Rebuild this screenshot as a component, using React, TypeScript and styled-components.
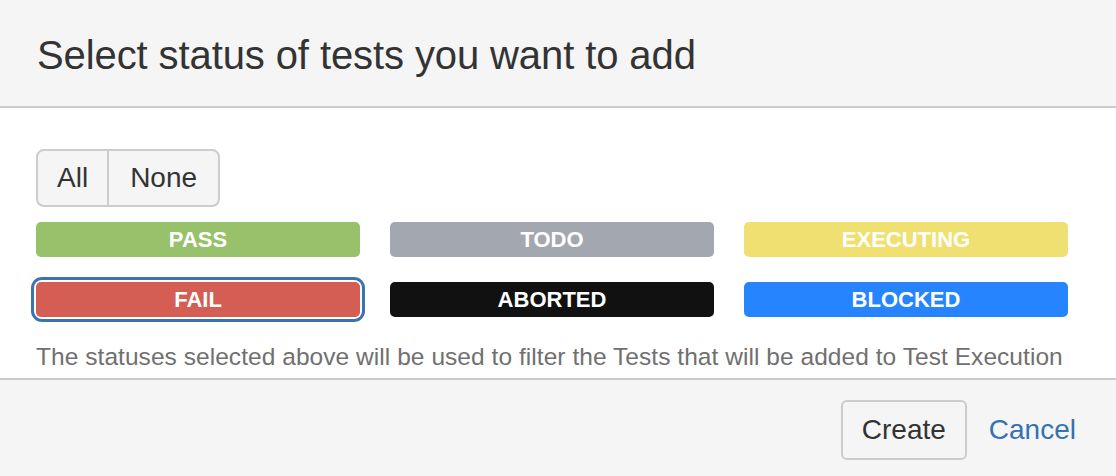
import styled, { createGlobalStyle } from "styled-components";

const GlobalStyle = createGlobalStyle`
  html, body {
    margin: 0;
    padding: 0;
    background: #ffffff;
    font-family: "Liberation Sans", Arial, sans-serif;
  }
`;

type Status = { label: string; color: string; focused?: boolean };

const statuses: Status[] = [
  { label: "PASS", color: "#97c16a" },
  { label: "TODO", color: "#a3a7af" },
  { label: "EXECUTING", color: "#f0e071" },
  { label: "FAIL", color: "#d45e54", focused: true },
  { label: "ABORTED", color: "#111111" },
  { label: "BLOCKED", color: "#2684ff" },
];

export default function App() {
  return (
    <>
      <GlobalStyle />
      <Dialog>
        <Header>
          <Title>Select status of tests you want to add</Title>
        </Header>
        <Content>
          <ButtonGroup>
            <GroupButton>All</GroupButton>
            <GroupButton>None</GroupButton>
          </ButtonGroup>
          <StatusGrid>
            {statuses.map((s) => (
              <StatusSlot key={s.label} $focused={s.focused}>
                <StatusBar $color={s.color}>{s.label}</StatusBar>
              </StatusSlot>
            ))}
          </StatusGrid>
          <Hint>
            The statuses selected above will be used to filter the Tests that
            will be added to Test Execution
          </Hint>
        </Content>
        <Footer>
          <CreateButton>Create</CreateButton>
          <CancelLink href="#">Cancel</CancelLink>
        </Footer>
      </Dialog>
    </>
  );
}

const Dialog = styled.div`
  display: flex;
  flex-direction: column;
  width: 1116px;
  height: 476px;
`;

const Header = styled.div`
  height: 108px;
  background: #f5f5f5;
  border-bottom: 2px solid #cccccc;
  display: flex;
  align-items: center;
  padding: 4px 37px 0;
  box-sizing: border-box;
  flex: none;
`;

const Title = styled.h2`
  margin: 0;
  font-size: 40px;
  font-weight: 400;
  color: #333333;
  letter-spacing: -0.1px;
`;

const Content = styled.div`
  height: 270px;
  padding: 41px 36px 0;
  box-sizing: border-box;
  display: flex;
  flex-direction: column;
  flex: none;
`;

const ButtonGroup = styled.div`
  display: inline-flex;
  align-self: flex-start;
  height: 58px;
  border: 2px solid #cccccc;
  border-radius: 8px;
  background: #f5f5f5;
  box-sizing: border-box;
  overflow: hidden;
`;

const GroupButton = styled.button`
  border: none;
  background: transparent;
  font-family: inherit;
  font-size: 28px;
  color: #333333;
  padding: 0 19px;
  & + & {
    border-left: 2px solid #cccccc;
    padding: 0 21px;
  }
`;

const StatusGrid = styled.div`
  display: grid;
  grid-template-columns: repeat(3, 324px);
  column-gap: 30px;
  row-gap: 25px;
  margin-top: 15px;
`;

const StatusSlot = styled.div<{ $focused?: boolean }>`
  display: flex;
  border-radius: 6px;
  box-shadow: ${(p) =>
    p.$focused ? "0 0 0 2px #ffffff, 0 0 0 5px #3b73af" : "none"};
`;

const StatusBar = styled.div<{ $color: string }>`
  flex: 1;
  height: 35px;
  border-radius: 5px;
  background: ${(p) => p.$color};
  color: #ffffff;
  font-weight: 700;
  font-size: 22px;
  display: flex;
  align-items: center;
  justify-content: center;
`;

const Hint = styled.p`
  margin: 26px 0 0;
  font-size: 24.5px;
  color: #707070;
  letter-spacing: 0.05px;
`;

const Footer = styled.div`
  flex: 1;
  background: #f5f5f5;
  border-top: 2px solid #cccccc;
  display: flex;
  align-items: center;
  justify-content: flex-end;
  padding: 4px 40px 0 0;
  gap: 22px;
`;

const CreateButton = styled.button`
  height: 60px;
  padding: 0 19px;
  border: 2px solid #cccccc;
  border-radius: 6px;
  background: #f5f5f5;
  font-family: inherit;
  font-size: 28px;
  color: #333333;
`;

const CancelLink = styled.a`
  font-size: 28px;
  color: #3572b0;
  text-decoration: none;
`;
